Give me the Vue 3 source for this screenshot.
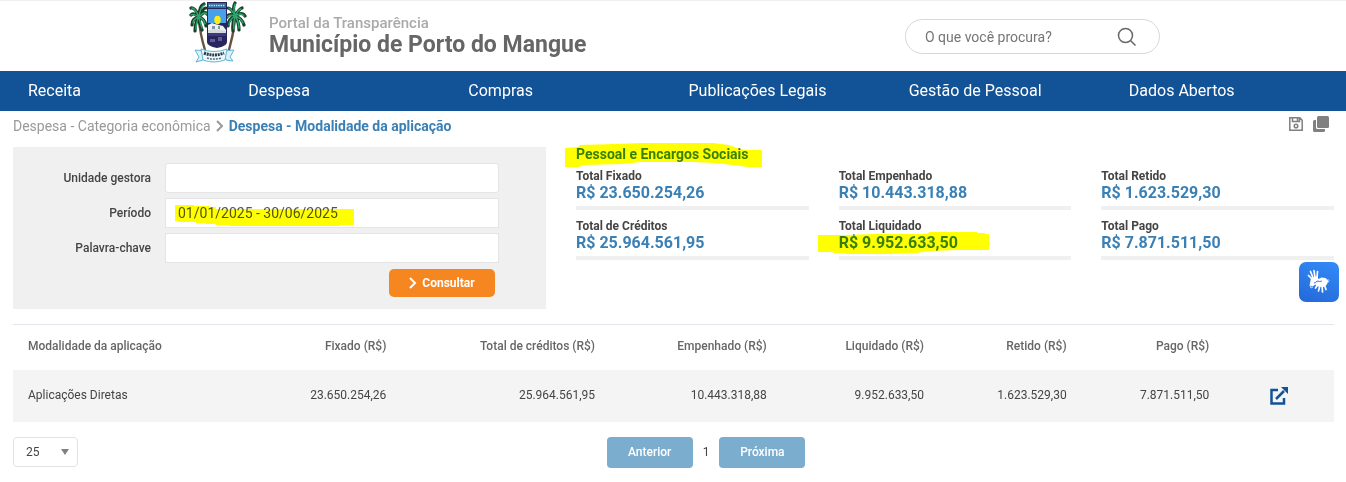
<script setup>
import { ref } from 'vue'

const menu = ['Receita', 'Despesa', 'Compras', 'Publicações Legais', 'Gestão de Pessoal', 'Dados Abertos']

const totals = [
  { label: 'Total Fixado', value: 'R$ 23.650.254,26' },
  { label: 'Total Empenhado', value: 'R$ 10.443.318,88' },
  { label: 'Total Retido', value: 'R$ 1.623.529,30' },
  { label: 'Total de Créditos', value: 'R$ 25.964.561,95' },
  { label: 'Total Liquidado', value: 'R$ 9.952.633,50', marked: true },
  { label: 'Total Pago', value: 'R$ 7.871.511,50' },
]

const columns = [
  { name: 'Fixado (R$)', key: 'fixado' },
  { name: 'Total de créditos (R$)', key: 'creditos' },
  { name: 'Empenhado (R$)', key: 'empenhado' },
  { name: 'Liquidado (R$)', key: 'liquidado' },
  { name: 'Retido (R$)', key: 'retido' },
  { name: 'Pago (R$)', key: 'pago' },
]

const rows = [
  {
    nome: 'Aplicações Diretas',
    fixado: '23.650.254,26',
    creditos: '25.964.561,95',
    empenhado: '10.443.318,88',
    liquidado: '9.952.633,50',
    retido: '1.623.529,30',
    pago: '7.871.511,50',
  },
]

const busca = ref('')
const unidade = ref('')
const periodo = ref('01/01/2025 - 30/06/2025')
const palavra = ref('')
const tamanho = ref('25')
</script>

<template>
  <div class="page">
    <header class="top">
      <a class="brand" href="#">
        <svg class="crest" viewBox="0 1 60 64" aria-hidden="true">
          <path d="M10 19Q11 34 16 50" fill="none" stroke="#6b5140" stroke-width="2.4" />
          <path d="M46 20Q44 36 40 50" fill="none" stroke="#6b5140" stroke-width="2.4" />
          <g fill="none" stroke="#173f2b" stroke-width="3.2" stroke-linecap="round">
            <path d="M10 17Q6 7 2 8M10 17Q10 6 15 4M10 17Q4 12 2 15M10 17Q3 18 3 25M10 17Q6 22 6 31M10 17Q10 23 13 30M10 17Q16 19 17 26M10 17Q16 10 18 14M10 17Q14 8 17 8" />
            <path d="M46 16Q43 8 46 3M46 16Q42 8 39 8M46 16Q50 9 53 8M46 16Q40 13 38 17M46 16Q53 11 56 16M46 16Q39 19 39 26M46 16Q43 23 44 31M46 16Q50 22 50 30M46 16Q53 18 55 25" />
          </g>
          <g fill="none" stroke="#2fa56c" stroke-width="1.4" stroke-linecap="round">
            <path d="M10 17Q6 8 3 8M10 17Q11 8 15 5M10 17Q5 13 2 15M10 17Q4 19 4 23M10 17Q7 22 7 29M10 17Q11 23 13 28M10 17Q15 19 16 24M10 17Q15 11 18 14" />
            <path d="M46 16Q44 8 46 4M46 16Q43 10 40 8M46 16Q49 10 52 9M46 16Q41 14 38 17M46 16Q52 12 55 16M46 16Q40 20 40 25M46 16Q44 23 45 29M46 16Q50 22 50 28M46 16Q52 18 54 23" />
          </g>
          <path d="M18 2h20v40q0 4-10 6q-10-2-10-6z" fill="#28245e" />
          <path d="M19 9h18v14H19z" fill="#46a0ea" />
          <path d="M19 3h18v5H19z" fill="#2c6d9c" />
          <path d="M20 5.500h16" stroke="#c2dce8" stroke-width="1.6" stroke-dasharray="1.500 .8" />
          <ellipse cx="28.500" cy="20" rx="3.200" ry="4.200" fill="#ffee12" />
          <path d="M19 25l4-2 3 1 8 2 3 4v3H19z" fill="#eef1ed" />
          <path d="M19 30l8-1 10 2v3H19z" fill="#d4d9e0" />
          <path d="M23 26h3v3h-3zM29 26h2v3h-2z" fill="#8395a2" />
          <path d="M19 33h18v3H19z" fill="#3c3a7c" />
          <path d="M21 39h5v3h-5zM29 37h4v4h-4z" fill="#5f5c96" />
          <path d="M6 50l10 1-2 9-7 2 3-5zM45 50l-10 1 2 9 7 1-3-4z" fill="#d8f2fb" stroke="#66b3d2" stroke-width="1" />
          <path d="M12 49q13 5 26 0l-2 11q-11 4-22 0z" fill="#eefafd" stroke="#66b3d2" stroke-width="1" />
          <path d="M15 53q10 4 20 0" fill="none" stroke="#253c4b" stroke-width="3" stroke-dasharray="2 .8" />
          <path d="M18 58q7 2 15 0" fill="none" stroke="#536b77" stroke-width="1.5" stroke-dasharray="2 1" />
        </svg>
        <span class="names">
          <span class="portal">Portal da Transparência</span>
          <strong class="city">Município de Porto do Mangue</strong>
        </span>
      </a>
      <form class="search" role="search" @submit.prevent>
        <input v-model="busca" type="text" aria-label="O que você procura?" placeholder="O que você procura?" />
        <button type="submit" aria-label="Buscar">
          <svg viewBox="0 0 20 20"><circle cx="8.5" cy="8.5" r="7" /><path d="M13.5 13.5L18.5 18.5" /></svg>
        </button>
      </form>
    </header>

    <nav class="menu">
      <a v-for="item in menu" :key="item" href="#">{{ item }}</a>
    </nav>

    <main class="content">
      <div class="trail">
        <a href="#">Despesa - Categoria econômica</a>
        <svg class="chevron" viewBox="0 0 8 12"><path d="M1 1l5 5-5 5" /></svg>
        <strong>Despesa - Modalidade da aplicação</strong>
        <span class="tools">
          <button type="button" aria-label="Salvar">
            <svg class="save" viewBox="0 0 14 14"><path d="M.8.8h10l2.4 2.4v10H.8zM3.5 1v3.5h7V1M8.5 1v3" /><circle cx="7" cy="9" r="1.8" /></svg>
          </button>
          <button type="button" aria-label="Copiar">
            <svg class="copy" viewBox="0 0 16 16"><path d="M0 5.500q0-1.500 1.500-1.500H3v7.500Q3 13 4.500 13H12v1.500q0 1.500-1.500 1.500h-9Q0 16 0 14.500z" /><rect x="4" width="12" height="12" rx="1.500" /></svg>
          </button>
        </span>
      </div>

      <div class="panels">
        <form class="filter" @submit.prevent>
          <div class="field">
            <label for="unidade">Unidade gestora</label>
            <div class="box"><input id="unidade" v-model="unidade" class="round" type="text" /></div>
          </div>
          <div class="field">
            <label for="periodo">Período</label>
            <div class="box">
              <input id="periodo" v-model="periodo" type="text" />
              <svg class="mark mark-period" viewBox="0 0 179 21" aria-hidden="true">
                <path d="M0 0h19v1h15v1h7v2h138v16h-14v1H54v-1H41v-1H31v-1H21v-1H3v-1H0z" />
              </svg>
            </div>
          </div>
          <div class="field">
            <label for="palavra">Palavra-chave</label>
            <div class="box"><input id="palavra" v-model="palavra" type="text" /></div>
          </div>
          <button class="submit" type="submit">
            <svg viewBox="0 0 8 12"><path d="M1 1l5 5-5 5" /></svg>Consultar
          </button>
        </form>

        <section class="summary">
          <h1>
            Pessoal e Encargos Sociais
            <svg class="mark mark-title" viewBox="0 0 198 24" aria-hidden="true">
              <path d="M0 5l13-1 2-2 34-1 29-1h70l16 2 8 3 8 2h17v17h-14l-15-2-20-2-20-1H76l-20 2-38 1-4 2H0z" />
            </svg>
          </h1>
          <dl class="totals">
            <div v-for="t in totals" :key="t.label" class="total">
              <dt>{{ t.label }}</dt>
              <dd>
                {{ t.value }}
                <svg v-if="t.marked" class="mark mark-value" viewBox="0 0 172 23" aria-hidden="true">
                  <path d="M0 3h28l28-1h52l4-2h47v1h8v1h4v16h-32l-26 1-15 2-26 1H28l-4-1H16l-2-1H0z" />
                </svg>
              </dd>
            </div>
          </dl>
        </section>
      </div>

      <table class="data">
        <colgroup>
          <col class="c-name" /><col class="c-fix" /><col class="c-cred" /><col class="c-emp" />
          <col class="c-liq" /><col class="c-ret" /><col class="c-pago" /><col />
        </colgroup>
        <thead>
          <tr>
            <th scope="col" class="first">Modalidade da aplicação</th>
            <th v-for="c in columns" :key="c.key" scope="col">{{ c.name }}</th>
            <th aria-label="Detalhes"></th>
          </tr>
        </thead>
        <tbody>
          <tr v-for="r in rows" :key="r.nome">
            <td class="first">{{ r.nome }}</td>
            <td v-for="c in columns" :key="c.key">{{ r[c.key] }}</td>
            <td class="open">
              <a href="#" aria-label="Abrir detalhes">
                <svg viewBox="0 0 18 18"><path class="line" d="M8 3H1.500v13.500H14V11M6 12L14 4" /><path class="tip" d="M11 0h7v7z" /></svg>
              </a>
            </td>
          </tr>
        </tbody>
      </table>

      <div class="pager">
        <div class="size">
          <select v-model="tamanho" aria-label="Registros por página">
            <option>25</option>
            <option>50</option>
            <option>100</option>
          </select>
          <svg viewBox="0 0 8 6" aria-hidden="true"><path d="M0 0h8L4 6z" /></svg>
        </div>
        <div class="pages">
          <button type="button">Anterior</button>
          <span>1</span>
          <button type="button">Próxima</button>
        </div>
      </div>
    </main>

    <button class="libras" type="button" aria-label="Acessível em Libras">
      <svg viewBox="0 0 40 40" aria-hidden="true">
        <path class="hand" d="M14 18L9.500 13.500M14.500 17L11.500 9.500M16 16L15 8.500M18 16L18.500 9.500M19 22L16.500 26M21 23L19.500 29M23 23L23.500 30M25 22L27 27.500" />
        <path class="palm" d="M12 16l6-2 1.500 3 3-1.500 4 .5 3 3-2 4-3 2-6-.5-2-2-3 2-3-1z" />
        <path class="gap" d="M15 21q2 0 3-2 3 1 5 0" />
        <path class="motion" d="M11 23l1 3 2-1M28.500 17l1.500 1.500-1 2" />
      </svg>
    </button>
  </div>
</template>

<style>
body {
  margin: 0;
  background: #fff;
}
</style>

<style scoped>
.page {
  position: relative;
  font: 12px/16px Roboto, "Liberation Sans", sans-serif;
  color: #444;
}
.page * {
  box-sizing: border-box;
}
a {
  color: inherit;
  text-decoration: none;
}
button,
input,
select {
  font: inherit;
  color: inherit;
  margin: 0;
}
button {
  border: 0;
  padding: 0;
  cursor: pointer;
}
.top {
  display: flex;
  align-items: flex-start;
  justify-content: space-between;
  height: 71px;
  border-top: 1px solid #f0f0f0;
  padding: 0 186px 0 189px;
}
.brand {
  display: flex;
  gap: 20px;
}
.crest {
  width: 60px;
  height: 64px;
}
.names {
  display: flex;
  flex-direction: column;
  padding-top: 12px;
}
.portal {
  font-size: 15px;
  line-height: 20px;
  font-weight: 500;
  color: #aaa;
}
.city {
  font-size: 23px;
  line-height: 23px;
  font-weight: 700;
  color: #666;
}
.search {
  display: flex;
  align-items: center;
  width: 255px;
  height: 35px;
  margin-top: 18px;
  padding: 0 22px 0 19px;
  border: 1px solid #d8d8d8;
  border-radius: 18px;
}
.search input {
  flex: 1;
  min-width: 0;
  border: 0;
  padding: 0;
  outline: 0;
  font-size: 14px;
  background: none;
}
.search input::placeholder {
  color: #757575;
  opacity: 1;
}
.search button {
  display: flex;
  background: none;
}
.search svg {
  width: 20px;
  height: 20px;
  fill: none;
  stroke: #666;
  stroke-width: 1.5;
}
.menu {
  display: grid;
  grid-template-columns: repeat(6, 1fr);
  padding: 0 12px 0 13px;
  background: #125296;
  color: #fff;
}
.menu a {
  padding: 0 15px;
  font-size: 16px;
  line-height: 40px;
}
.content {
  padding: 0 12px 0 13px;
}
.trail {
  display: flex;
  align-items: center;
  height: 36px;
  padding-bottom: 6px;
  font-size: 14px;
  color: #999;
}
.trail strong {
  font-weight: 700;
  color: #3a80b5;
}
.chevron {
  width: 8px;
  height: 12px;
  margin: 0 5px;
  fill: none;
  stroke: #999;
  stroke-width: 2;
}
.tools {
  display: flex;
  align-items: center;
  gap: 10px;
  margin-left: auto;
  padding: 0 5px 4px 0;
}
.tools button {
  display: flex;
  background: none;
}
.save {
  width: 14px;
  height: 14px;
  fill: none;
  stroke: #808080;
  stroke-width: 1.5;
}
.copy {
  width: 16px;
  height: 16px;
  fill: #808080;
}
.panels {
  display: grid;
  grid-template-columns: 533fr 758fr;
  gap: 30px;
}
.filter {
  display: flex;
  flex-direction: column;
  gap: 5px;
  padding: 16px 47px 12px 0;
  background: #f0f0f0;
}
.field {
  display: flex;
  align-items: center;
  gap: 14px;
}
.field label {
  width: 138px;
  text-align: right;
  font-weight: 500;
}
.box {
  position: relative;
  flex: 1;
}
.box input {
  display: block;
  width: 100%;
  height: 30px;
  padding: 0 12px;
  border: 1px solid #e5e5e5;
  background: #fff;
  font-size: 14px;
  color: #555;
  outline: 0;
}
.box input.round {
  border-radius: 3px;
}
.submit {
  display: flex;
  align-items: center;
  justify-content: center;
  gap: 5px;
  align-self: flex-end;
  width: 106px;
  height: 28px;
  margin: 1px 4px 0 0;
  border-radius: 5px;
  background: #f68720;
  color: #fff;
  font-weight: 700;
}
.submit svg {
  width: 8px;
  height: 12px;
  fill: none;
  stroke: #fff;
  stroke-width: 2;
}
.mark {
  position: absolute;
  fill: #ff0;
  mix-blend-mode: multiply;
  pointer-events: none;
}
.mark-period {
  left: 10px;
  top: 7px;
  width: 179px;
  height: 21px;
}
.mark-title {
  left: -11px;
  top: -4px;
  width: 198px;
  height: 24px;
}
.mark-value {
  left: -21px;
  top: -2px;
  width: 172px;
  height: 23px;
}
h1 {
  position: relative;
  margin: 0 0 8px;
  font-size: 14px;
  line-height: 14px;
  font-weight: 700;
  color: #3a80b5;
}
.totals {
  display: grid;
  grid-template-columns: repeat(3, 1fr);
  gap: 9px 30px;
  margin: 0;
}
.total {
  border-bottom: 4px solid #f0f0f0;
  padding-bottom: 4px;
}
dt {
  line-height: 15px;
  font-weight: 700;
}
dd {
  position: relative;
  margin: 0;
  font-size: 16px;
  line-height: 18px;
  font-weight: 700;
  color: #3a80b5;
}
.data {
  width: 100%;
  margin-top: 15px;
  border-top: 1px solid #e2e6ea;
  border-collapse: collapse;
  table-layout: fixed;
}
.c-name { width: 16%; }
.c-fix { width: 13.4%; }
.c-cred { width: 15.8%; }
.c-emp { width: 13%; }
.c-liq { width: 11.9%; }
.c-ret { width: 10.8%; }
.c-pago { width: 10.8%; }
th,
td {
  padding: 0 15px;
  text-align: right;
  white-space: nowrap;
}
th {
  height: 45px;
  padding-bottom: 3px;
  font-weight: 500;
  color: #666;
}
td {
  height: 52px;
  padding-bottom: 2px;
  background: #f4f4f4;
}
.first {
  text-align: left;
}
.open {
  padding-bottom: 0;
  text-align: center;
}
.open a {
  display: inline-flex;
  vertical-align: middle;
}
.open svg {
  width: 18px;
  height: 18px;
}
.line {
  fill: none;
  stroke: #125296;
  stroke-width: 2.5;
}
.tip {
  fill: #125296;
}
.pager {
  display: grid;
  grid-template-columns: 1fr auto 1fr;
  align-items: start;
  margin-top: 15px;
}
.size {
  position: relative;
  width: 65px;
}
.size select {
  display: block;
  width: 100%;
  height: 30px;
  padding: 0 12px;
  border: 1px solid #e2e2e2;
  border-radius: 4px;
  background: #fff;
  appearance: none;
  outline: 0;
}
.size svg {
  position: absolute;
  right: 9px;
  top: 12px;
  width: 8px;
  height: 6px;
  fill: #808080;
  pointer-events: none;
}
.pages {
  display: flex;
  align-items: center;
  gap: 10px;
  margin-left: 65px;
}
.pages button {
  width: 86px;
  height: 31px;
  border-radius: 4px;
  background: #7badcf;
  color: #fff;
  font-weight: 500;
}
.libras {
  position: absolute;
  right: 7px;
  top: 262px;
  display: flex;
  width: 40px;
  height: 40px;
  border-radius: 7px;
  background: linear-gradient(200deg, #338bf7, #2468d8);
}
.libras svg {
  width: 40px;
  height: 40px;
}
.hand {
  fill: none;
  stroke: #fff;
  stroke-width: 1.7;
  stroke-linecap: round;
}
.palm {
  fill: #fff;
}
.gap {
  fill: none;
  stroke: #2d78e6;
  stroke-width: 1;
}
.motion {
  fill: none;
  stroke: #b9d7ff;
  stroke-width: 1;
}
</style>
